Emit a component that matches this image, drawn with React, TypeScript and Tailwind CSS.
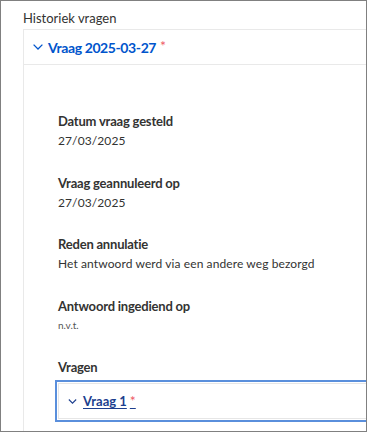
import React from 'react';

interface Field {
  label: string;
  value: string;
  small?: boolean;
}

const fields: Field[] = [
  { label: 'Datum vraag gesteld', value: '27/03/2025' },
  { label: 'Vraag geannuleerd op', value: '27/03/2025' },
  { label: 'Reden annulatie', value: 'Het antwoord werd via een andere weg bezorgd' },
  { label: 'Antwoord ingediend op', value: 'n.v.t.', small: true },
];

const Chevron = ({ className }: { className?: string }) => (
  <svg viewBox="0 0 10 6" className={className} fill="none" stroke="currentColor" strokeWidth="1.3">
    <polyline points="0.6,0.6 5,5 9.4,0.6" />
  </svg>
);

const App: React.FC = () => {
  return (
    <div
      className="w-[367px] h-[432px] overflow-hidden border border-[#808080] bg-white text-[#333332]"
      style={{ fontFamily: 'Lato, "Noto Sans", sans-serif' }}
    >
      <div className="pl-[22px] pt-[8px]">
        <h2 className="text-[13px] leading-[19px] font-normal">Historiek vragen</h2>

        <div className="mt-[1px] -mr-[20px] border-l border-t border-[#e9e9e9]">
          {/* accordion header */}
          <div className="h-[35px] flex items-center pl-[9px] border-b border-[#e9e9e9]">
            <Chevron className="w-[10px] h-[6px] text-[#0055cc]" />
            <span className="ml-[5px] text-[14px] font-bold tracking-[-0.4px] text-[#0055cc]">Vraag 2025-03-27</span>
            <span className="ml-[4px] text-[14px] leading-none text-[#ee5a66] self-start mt-[9px]">*</span>
          </div>

          {/* accordion body */}
          <div className="pl-[34px] pt-[47px] pb-[40px]">
            {fields.map((f) => (
              <div key={f.label} className="mb-[23.5px]">
                <div className="text-[13px] leading-[19px] font-bold tracking-[-0.2px]">{f.label}</div>
                {f.small ? (
                  <div className="text-[10px] leading-[19px] text-[#555]">{f.value}</div>
                ) : (
                  <div className="text-[12px] leading-[19px] tracking-[0.1px]">{f.value}</div>
                )}
              </div>
            ))}

            <div className="text-[13px] leading-[19px] font-bold tracking-[-0.2px]">Vragen</div>
            <div className="mt-[6px] outline-2 outline-offset-1 outline-[#5a8fdc] border border-[#e6e6e6] h-[36px] flex items-center pl-[9px]">
              <Chevron className="w-[9px] h-[5px] text-[#1d3f8f]" />
              <span className="ml-[6px] text-[13px] font-bold text-[#1d3f8f] underline underline-offset-2">
                Vraag 1
                <span className="ml-[3px] font-normal text-[14px] text-[#ee5a66]">*</span>
              </span>
            </div>
          </div>
        </div>
      </div>
    </div>
  );
};

export default App;
